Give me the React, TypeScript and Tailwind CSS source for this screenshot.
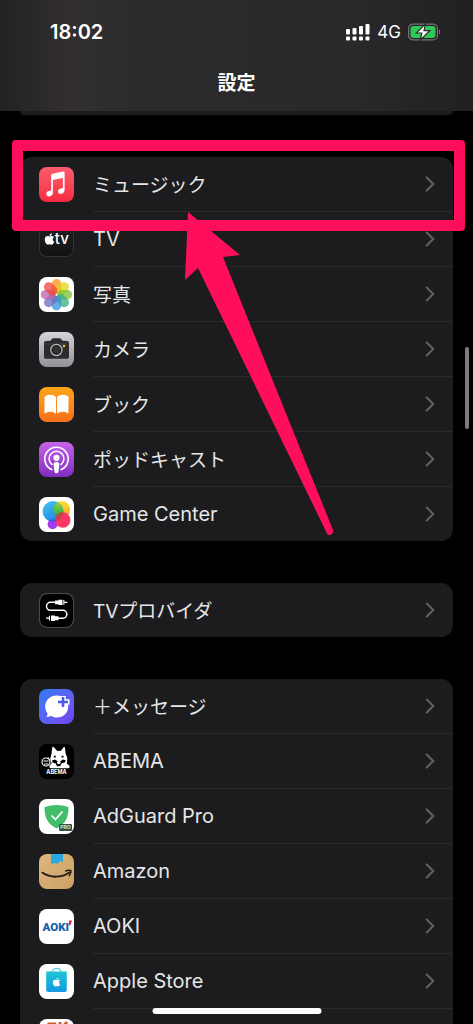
import React from 'react';
import { FaApple } from 'react-icons/fa';
import { ChevronRight } from 'lucide-react';

interface SettingsItem {
  label: string;
  icon: React.ReactNode;
  latin?: boolean;
}

interface TileProps {
  className?: string;
  children: React.ReactNode;
}

function Tile({ className = 'bg-white', children }: TileProps) {
  return (
    <span className={`block w-[35px] h-[35px] shrink-0 rounded-lg overflow-hidden ${className}`}>
      <svg viewBox="0 0 35 35" className="w-full h-full" aria-hidden="true">
        {children}
      </svg>
    </span>
  );
}

const MusicIcon = () => (
  <Tile className="bg-gradient-to-b from-[#fb5b6d] to-[#f8293f]">
    <path
      fill="#fff"
      d="M12.2 8.2c0-.8.4-1.3 1.2-1.5l11-2.2c.8-.1 1.2.2 1.2 1v17.3c0 2.4-1.4 3.8-3.7 4-1.7.2-2.9-.8-2.9-2.4 0-1.5 1-2.5 2.8-2.9l1.2-.3c.6-.1.9-.4.9-1V11l-10 2v12.4c0 2.3-1.3 3.7-3.6 4-1.8.2-3-.8-3-2.4s1-2.6 2.8-2.9l1.2-.3c.6-.1.9-.4.9-1z"
    />
  </Tile>
);

const AppleTvIcon = () => (
  <Tile className="bg-gradient-to-b from-[#232325] to-[#121213] ring-1 ring-inset ring-[#333335]">
    <FaApple x="4" y="10.5" size={13} color="#fff" />
    <text x="15.8" y="22" fill="#fff" fontSize="15" fontWeight="500" fontFamily="Inter, sans-serif">tv</text>
  </Tile>
);

const petals = ['#f7931c', '#dcd70f', '#7fc02f', '#35ad7c', '#3592d4', '#6a6cbf', '#bc62ab', '#ee4437'];

const PhotosIcon = () => (
  <Tile>
    {petals.map((color, i) => (
      <rect
        key={color}
        x="12.7"
        y="2"
        width="9.6"
        height="15"
        rx="4.8"
        fill={color}
        transform={`rotate(${i * 45} 17.5 17.7)`}
        opacity="0.75"
      />
    ))}
    <circle cx="17.5" cy="17.7" r="1" fill="#fff" />
  </Tile>
);

const CameraIcon = () => (
  <Tile className="bg-gradient-to-b from-[#d6d4d9] to-[#929196]">
    <path
      fill="#2c2c2e"
      d="M5 11.2c0-1.4.8-2 2-2.1l4.6-.3 1.2-1.7c.4-.6.8-.8 1.5-.8h6.4c.7 0 1.1.2 1.5.8l1.2 1.7 4.6.3c1.3.1 2 .7 2 2.1v13.3c0 1.5-.8 2.3-2.3 2.3H7.3C5.8 26.8 5 26 5 24.5z"
    />
    <path stroke="#4a4a4c" strokeWidth="0.7" d="M5 12h25" />
    <circle cx="17.4" cy="18" r="5.6" fill="#252527" stroke="#bdbcc1" strokeWidth="1.2" />
    <circle cx="17.4" cy="18" r="3.5" fill="#333336" />
    <circle cx="25" cy="14" r="1.2" fill="#f2cc31" />
  </Tile>
);

const BooksIcon = () => (
  <Tile className="bg-gradient-to-b from-[#fea51a] to-[#f76f1b]">
    <path
      fill="#fff"
      d="M17 10.2C15.8 8.5 13.7 7.7 11.2 7.7 8.9 7.7 7 8.4 5.5 9.7v15.8c0 .7.6 1 1.2.6 1.4-1 2.9-1.4 4.7-1.4 2.2 0 4 .7 5.6 2zM18 10.2c1.2-1.7 3.3-2.5 5.8-2.5 2.3 0 4.2.7 5.7 2v15.8c0 .7-.6 1-1.2.6-1.4-1-2.9-1.4-4.7-1.4-2.2 0-4 .7-5.6 2z"
    />
  </Tile>
);

const PodcastIcon = () => (
  <Tile className="bg-gradient-to-b from-[#c863ea] to-[#812bc0]">
    <g fill="none" stroke="#fff" strokeWidth="1.6" strokeLinecap="round">
      <path d="M12.8 27.6A11.7 11.7 0 1 1 22.2 27.6" />
      <path d="M12.9 22.5A7.4 7.4 0 1 1 22.1 22.5" />
    </g>
    <circle cx="17.5" cy="15.8" r="3.1" fill="#fff" />
    <path fill="#fff" d="M14.6 22c0-1.3 1.1-2 2.9-2s2.9.7 2.9 2c0 1.6-.5 5.2-.9 7.4-.2 1.3-.8 1.8-2 1.8s-1.8-.5-2-1.8c-.4-2.2-.9-5.8-.9-7.4z" />
  </Tile>
);

const GameCenterIcon = () => (
  <Tile>
    <defs>
      <linearGradient id="gc-blue" x1="0" y1="0" x2="0.6" y2="1">
        <stop offset="0" stopColor="#49c8ee" />
        <stop offset="1" stopColor="#1b86ec" />
      </linearGradient>
      <linearGradient id="gc-yellow" x1="0" y1="0" x2="0" y2="1">
        <stop offset="0" stopColor="#fde23a" />
        <stop offset="1" stopColor="#f9a11d" />
      </linearGradient>
      <linearGradient id="gc-green" x1="0" y1="0" x2="0" y2="1">
        <stop offset="0" stopColor="#9bd832" />
        <stop offset="1" stopColor="#18a65a" />
      </linearGradient>
      <clipPath id="gc-clip">
        <circle cx="14" cy="14.5" r="10.4" />
      </clipPath>
    </defs>
    <circle cx="22.8" cy="12.5" r="8.4" fill="url(#gc-yellow)" />
    <circle cx="13.6" cy="27.2" r="5" fill="#a23df0" />
    <circle cx="14" cy="14.5" r="10.4" fill="url(#gc-blue)" />
    <circle cx="22.8" cy="12.5" r="8.4" fill="url(#gc-green)" clipPath="url(#gc-clip)" />
    <circle cx="23.8" cy="23" r="7.7" fill="#fb3767" />
    <circle cx="23.8" cy="23" r="7.7" fill="#c2483e" clipPath="url(#gc-clip)" />
    <circle cx="13.6" cy="27.2" r="5" fill="#5a45e8" clipPath="url(#gc-clip)" />
  </Tile>
);

const TvProviderIcon = () => (
  <Tile className="bg-black ring-1 ring-inset ring-[#4a4a4c]">
    <rect x="0.5" y="0.5" width="34" height="34" rx="7.5" fill="none" stroke="#4a4a4c" />
    <path
      fill="none"
      stroke="#fff"
      strokeWidth="1.5"
      d="M16 9.3h-4.5a4 4 0 0 0 0 8h12.4a3.9 3.9 0 0 1 0 7.9H19"
    />
    <path fill="#fff" d="M16 7.5h3.5v-.8h4v5.4h-4v-.8H16zM24.3 7h1.1v4.8h-1.1zM25.4 8.7h3v1.2h-3zM19.5 23.2H16v-.8h-4V28h4v-.8h3.5zM11 22.8H9.9v4.8H11zM9.9 24.6H7v1.2h2.9z" />
  </Tile>
);

const PlusMessageIcon = () => (
  <Tile className="bg-gradient-to-br from-[#267cf2] to-[#7442f6]">
    <path fill="#fff" d="M17.6 6.5c6.7 0 11.6 4.9 11.6 11 0 6.5-5 11-11.2 11-2.5 0-4.5-.6-6.2-1.8-1.2.9-2.7 1.3-4.4 1.2 1-1 1.3-2.3.9-3.9-1.4-1.8-2.1-4-2.1-6.4 0-6.2 4.9-11.1 11.4-11.1z" />
    <path stroke="#fff" strokeWidth="5.4" d="M24 7v12M18 13h12.5" />
    <path stroke="#4e5bea" strokeWidth="2.6" d="M24 8v10M19 13h10" />
  </Tile>
);

const AbemaIcon = () => (
  <Tile className="bg-black">
    <path
      fill="#fff"
      d="M12.4 10.5 13.2 4c.1-1.3.9-1.6 1.7-.7l3.4 3.6 3.6-.1 2.5-3.4c.7-.8 1.5-.5 1.6.6l.6 5.5 1.7 4.3-.4 6 2.4 1.7c.7 2-.2 2.7-2 2.7H12c-1.5 0-2-1-1.4-2.7l2-2-1.4-5z"
    />
    <path fill="#000" d="M13 16.5l3-1 2.3 1.6 3.4-.1 2-1.5 3 .8-.8 2.2-3.2.7-1.6 3h-3l-1.6-3-2.8-.5z" />
    <circle cx="19.8" cy="18.5" r="1.8" fill="#fff" />
    <path fill="#000" d="M14.8 11.7h2v1.7h-2zM22.5 11.7h2v1.7h-2z" />
    <g fill="none" stroke="#fff" strokeWidth="1.1">
      <circle cx="7" cy="18" r="4" />
      <path d="M4.5 17h5M5 20h4.5M9 13.5l2 3" />
    </g>
    <text x="17.5" y="29.5" fill="#fff" fontSize="5.5" fontWeight="700" textAnchor="middle" fontFamily="Inter, sans-serif">ABEMA</text>
  </Tile>
);

const AdGuardIcon = () => (
  <Tile>
    <path fill="#42bd69" d="M17.5 6c4.3 0 8.2.8 12 2.3 0 9.5-2.5 16.5-12 21.2C8 24.8 5.5 17.8 5.5 8.3 9.3 6.8 13.2 6 17.5 6z" />
    <path fill="none" stroke="#fff" strokeWidth="1.7" d="m12.5 16.5 4 4 7-8" />
    <rect x="20" y="25" width="13" height="7" rx="1" fill="#34533e" />
    <text x="26.5" y="30.4" fill="#d9e8dd" fontSize="5" fontWeight="700" textAnchor="middle" fontFamily="Inter, sans-serif">PRO</text>
  </Tile>
);

const AmazonIcon = () => (
  <Tile className="bg-gradient-to-br from-[#dcb77f] to-[#cca063]">
    <path fill="#27a9e0" d="M12 0h12v8l-3-1-2.5 2.7-3-.8L12 10z" />
    <path fill="none" stroke="#1d1a1b" strokeWidth="1.8" strokeLinecap="round" d="M3.3 18.6c8 5.6 19.5 5.4 27 0" />
    <path fill="none" stroke="#1d1a1b" strokeWidth="1.5" strokeLinecap="round" d="M26.7 17c2-.8 3.7-.9 5.2-.3.2 1.8-.4 3.5-1.7 5" />
  </Tile>
);

const AokiIcon = () => (
  <Tile>
    <text x="3.5" y="22" fill="#1761a8" fontSize="11.5" fontWeight="900" fontFamily="Roboto, sans-serif">AOKI</text>
    <path fill="#d9263b" d="M30.2 11.5h2.8l-1.6 4.8h-1.8z" />
  </Tile>
);

const AppleStoreIcon = () => (
  <Tile>
    <defs>
      <linearGradient id="store-bag" x1="0" y1="0" x2="0" y2="1">
        <stop offset="0" stopColor="#1fc5d6" />
        <stop offset="1" stopColor="#159ae0" />
      </linearGradient>
    </defs>
    <path fill="none" stroke="#55cfdc" strokeWidth="1.2" d="M13 8.5c0-5.5 9-5.5 9 0" />
    <path fill="url(#store-bag)" d="M7.2 7.5h20.6v18.3c0 1.5-.8 2.2-2.2 2.2H9.4c-1.4 0-2.2-.7-2.2-2.2z" />
    <FaApple x="12.5" y="13" size={10} color="#fff" />
  </Tile>
);

const CutOffIcon = () => (
  <Tile>
    <path fill="none" stroke="#d8572c" strokeWidth="3" d="M10 16V5h7M16 5v9M21 16V3M28 3l-6 7" />
  </Tile>
);

const mediaItems: SettingsItem[] = [
  { label: 'ミュージック', icon: <MusicIcon /> },
  { label: 'TV', icon: <AppleTvIcon />, latin: true },
  { label: '写真', icon: <PhotosIcon /> },
  { label: 'カメラ', icon: <CameraIcon /> },
  { label: 'ブック', icon: <BooksIcon /> },
  { label: 'ポッドキャスト', icon: <PodcastIcon /> },
  { label: 'Game Center', icon: <GameCenterIcon />, latin: true },
];

const providerItems: SettingsItem[] = [{ label: 'TVプロバイダ', icon: <TvProviderIcon /> }];

const appItems: SettingsItem[] = [
  { label: '＋メッセージ', icon: <PlusMessageIcon /> },
  { label: 'ABEMA', icon: <AbemaIcon />, latin: true },
  { label: 'AdGuard Pro', icon: <AdGuardIcon />, latin: true },
  { label: 'Amazon', icon: <AmazonIcon />, latin: true },
  { label: 'AOKI', icon: <AokiIcon />, latin: true },
  { label: 'Apple Store', icon: <AppleStoreIcon />, latin: true },
  { label: '', icon: <CutOffIcon /> },
];

function SettingsGroup({ items }: { items: SettingsItem[] }) {
  return (
    <ul className="shrink-0 rounded-xl bg-[#1c1c1e] overflow-hidden">
      {items.map((item, i) => (
        <li key={item.label}>
          {i > 0 && <div className="h-px ml-[73px] bg-[#2a2a2c]" />}
          <a href="#" className="flex items-center gap-[19px] h-[54px] pl-[19px] pr-[10px]">
            {item.icon}
            <span className={`flex-1 leading-7 text-[#e6e6e8] ${item.latin ? 'text-xl' : 'text-[19px] pt-1'}`}>
              {item.label}
            </span>
            <ChevronRight className="w-[26px] h-[26px] text-[#5f5f63]" strokeWidth={2} />
          </a>
        </li>
      ))}
    </ul>
  );
}

function StatusBar() {
  return (
    <div className="flex items-center justify-between h-6 pl-[50px] pr-8">
      <span className="text-xl font-semibold">18:02</span>
      <div className="flex items-center gap-[7px]">
        <svg width="24" height="17" viewBox="0 0 24 17" fill="#fff" aria-hidden="true">
          <rect x="0" y="5" width="4" height="5.5" rx="1" />
          <rect x="6.5" y="4" width="4" height="6.5" rx="1" />
          <rect x="13" y="2" width="4" height="8.5" rx="1" />
          <rect x="19.5" y="0" width="4" height="10.5" rx="1" />
          <rect x="0" y="12.5" width="4" height="4" rx="1" />
          <rect x="6.5" y="12.5" width="4" height="4" rx="1" />
          <rect x="13" y="12.5" width="4" height="4" rx="1" />
          <rect x="19.5" y="12.5" width="4" height="4" rx="1" />
        </svg>
        <span className="text-[17px] leading-6">4G</span>
        <svg width="33" height="18" viewBox="0 0 33 18" aria-hidden="true">
          <rect x="0.6" y="1.1" width="28.8" height="15.8" rx="4.5" fill="none" stroke="#77777a" strokeWidth="1.2" />
          <rect x="2.5" y="3" width="25" height="12" rx="3" fill="#32c759" />
          <path d="M31 6.5c1.6.6 1.6 4.4 0 5z" fill="#77777a" />
          <path d="M17.5.8 8.3 10h5.5l-1.5 7 9.5-9.3H16z" fill="#fff" stroke="#29292b" strokeWidth="1.2" />
        </svg>
      </div>
    </div>
  );
}

export default function App() {
  return (
    <div
      lang="ja"
      className="relative flex flex-col h-screen overflow-hidden bg-black text-white font-[Inter,'Noto_Sans_CJK_JP',sans-serif]"
    >
      <header className="flex flex-col gap-7 shrink-0 pt-5 pb-[15px] bg-[linear-gradient(90deg,#222221,#332f2f_15%,#2b2b2d_28%,#29292b_75%,#202021)]">
        <StatusBar />
        <h1 className="text-center text-[19px] leading-6 font-bold">設定</h1>
      </header>

      <main className="flex flex-col flex-1 gap-[42px] min-h-0 px-5 overflow-hidden">
        <div className="h-1 shrink-0 rounded-b-xl bg-[#1c1c1e]" />
        <SettingsGroup items={mediaItems} />
        <SettingsGroup items={providerItems} />
        <SettingsGroup items={appItems} />
      </main>

      {/* scroll thumb and home indicator */}
      <div className="absolute right-1 top-[347px] w-1 h-[82px] rounded-full bg-[#7d7d80]" />
      <div className="absolute bottom-[10px] left-1/2 -translate-x-1/2 w-[169px] h-[6px] rounded-full bg-white" />

      {/* callout around the music row */}
      <div className="absolute left-3 right-2 top-[140px] h-[91px] border-[11px] border-[#ff0f5b] rounded-[4px] pointer-events-none" />
      <svg
        className="absolute left-[185px] top-[212px] pointer-events-none"
        width="150"
        height="324"
        viewBox="0 0 150 324"
        fill="#ff0f5b"
        aria-hidden="true"
      >
        <path d="M3 0 55 43 38 45 148 318C149.5 322 143.5 325 142 321.5L13 56 0 68z" />
      </svg>
    </div>
  );
}
